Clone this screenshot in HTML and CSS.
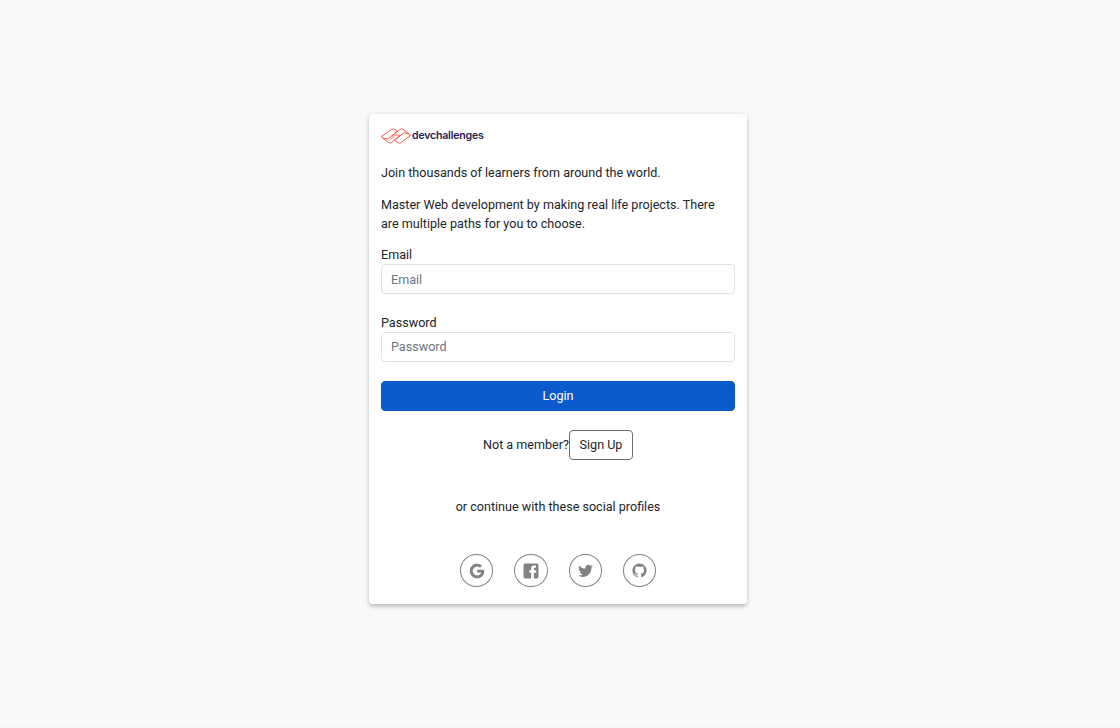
FILE: index.html
```
<!DOCTYPE html>
<html lang="en">
<head>
<meta charset="utf-8">
<title>Login | devchallenges</title>
<link rel="stylesheet" href="styles.css">
</head>
<body>
<main class="card">
  <div class="brand">
    <svg class="brand-mark" viewBox="0 0 30 16" fill="none" stroke="#f4503c" stroke-width=".9" stroke-linejoin="round" stroke-linecap="round">
      <path d="M1 8 L10.600 1.400 Q11.800 .7 13.200 1.200 L15.800 2.400 Q16.600 3 15.800 3.800 L6.800 10.800 L1.600 10 Q-.1 9.200 1 8Z"/>
      <path d="M1.600 10 L7.600 14.600 Q9 15.600 10.400 14.600 L19.600 7.600 L15 6.600 L9 11.400"/>
      <path d="M29 8 L19.600 14.800 Q18.400 15.600 17 14.800 L14 12.800 Q13.200 12 14 11.400 L22.800 4.800 L28.400 6.200 Q30 7 29 8Z"/>
      <path d="M28.400 6.200 L22 1.400 Q20.600 .4 19.200 1.400 L11.200 7.600"/>
    </svg>
    <span class="brand-name">devchallenges</span>
  </div>
  <p class="lead">Join thousands of learners from around the world.</p>
  <p class="text">Master Web development by making real life projects. There are multiple paths for you to choose.</p>
  <form class="form">
    <label class="label" for="email">Email</label>
    <input class="input" id="email" type="email" placeholder="Email">
    <label class="label" for="password">Password</label>
    <input class="input input-password" id="password" type="password" placeholder="Password">
    <button class="login" type="button">Login</button>
  </form>
  <div class="member"><span class="member-text">Not a member?</span><button class="signup" type="button">Sign Up</button></div>
  <p class="social-text">or continue with these social profiles</p>
  <div class="socials">
    <a class="social"><svg class="icon google" viewBox="0 0 24 24"><path d="M12.200 10.200v3.700h5.300c-.6 2.300-2.500 4-5.300 4a5.900 5.900 0 1 1 3.800-10.400l2.800-2.700A9.800 9.800 0 1 0 12.200 21.800c6.200 0 9.900-4.400 9.600-11.600z"/></svg></a>
    <a class="social"><svg class="icon facebook" viewBox="0 0 24 24"><path d="M5 3h14a2 2 0 0 1 2 2v14a2 2 0 0 1-2 2h-3.500v-6.800h2.700v-3h-2.700V9.500c0-.9.5-1.300 1.300-1.300H18V5.500h-2.500a3.300 3.300 0 0 0-3.300 3.300v2.400H10v3h2.200V21H5a2 2 0 0 1-2-2V5a2 2 0 0 1 2-2z"/></svg></a>
    <a class="social"><svg class="icon twitter" viewBox="0 0 24 24"><path d="M22.460 6c-.770.350-1.600.580-2.460.690.880-.530 1.560-1.370 1.880-2.380-.830.500-1.750.850-2.720 1.050C18.370 4.500 17.260 4 16 4c-2.350 0-4.270 1.920-4.270 4.290 0 .340.040.670.110.980C8.280 9.090 5.110 7.380 3 4.790c-.370.630-.580 1.370-.580 2.150 0 1.490.750 2.810 1.910 3.560-.710 0-1.370-.200-1.950-.500v.030c0 2.080 1.480 3.820 3.440 4.210a4.220 4.220 0 0 1-1.930.070 4.280 4.280 0 0 0 4 2.980 8.521 8.521 0 0 1-5.330 1.840c-.340 0-.680-.020-1.020-.060C3.440 20.290 5.700 21 8.120 21 16 21 20.330 14.460 20.330 8.790c0-.190 0-.370-.010-.560.840-.600 1.560-1.360 2.140-2.230z"/></svg></a>
    <a class="social"><svg class="icon github" viewBox="0 0 24 24"><path d="M12 2A10 10 0 0 0 2 12c0 4.420 2.870 8.170 6.840 9.500.500.080.660-.230.660-.500v-1.690c-2.770.600-3.360-1.340-3.360-1.340-.460-1.160-1.110-1.470-1.110-1.470-.910-.620.070-.600.070-.600 1 .070 1.530 1.030 1.530 1.030.870 1.520 2.340 1.070 2.910.830.090-.650.350-1.090.630-1.340-2.220-.250-4.550-1.110-4.550-4.920 0-1.110.380-2 1.030-2.710-.100-.250-.450-1.290.100-2.640 0 0 .840-.270 2.750 1.020.790-.220 1.650-.330 2.500-.330s1.710.110 2.500.330c1.910-1.290 2.750-1.020 2.750-1.020.550 1.350.200 2.390.100 2.640.650.710 1.030 1.600 1.030 2.710 0 3.820-2.340 4.660-4.570 4.910.360.310.690.920.690 1.850V21c0 .270.160.590.670.500C19.140 20.160 22 16.420 22 12A10 10 0 0 0 12 2z"/></svg></a>
  </div>
</main>
</body>
</html>
```
FILE: styles.css
```
* { box-sizing: border-box; }
body {
  margin: 0;
  height: 728px;
  padding: 114px 0 0 369px;
  background: #f9f9f9;
  border-bottom: 2px solid #f5f6f8;
  color: #212529;
  font: 12.58px/19px Roboto, sans-serif;
}
.card {
  width: 378px;
  height: 490px;
  padding: 13px 12px 0;
  background: #fff;
  border-radius: 4px;
  box-shadow: 0 3px 4px rgba(0, 0, 0, .2), 0 0 4px rgba(0, 0, 0, .08);
}
.brand { display: flex; height: 18px; }
.brand-mark { width: 30px; height: 16px; margin-top: 1px; }
.brand-name {
  margin-left: 1px;
  color: #282051;
  font: 600 10.6px/17px Inter, sans-serif;
  letter-spacing: -.22px;
}
.lead { margin: 18px 0 13px; }
.text { margin: 0 0 12px; }
.form { display: flex; flex-direction: column; }
.label { display: block; height: 19px; }
.input {
  width: 100%;
  height: 30px;
  margin: 0 0 19px;
  padding: 0 9px;
  border: 1px solid #dee2e6;
  border-radius: 4px;
  background: #fff;
  color: #212529;
  font: inherit;
}
.input-password { padding-bottom: 2px; }
.input::placeholder { color: #6c757d; opacity: 1; }
.login {
  height: 30px;
  padding: 0 0 2px;
  border: 1px solid #0b5acb;
  border-radius: 4px;
  background: #0b5acb;
  color: #fff;
  font: inherit;
}
.member { display: flex; justify-content: center; align-items: center; margin-top: 19px; }
.member-text { padding-bottom: 2px; }
.signup {
  width: 64px;
  height: 30px;
  padding: 0 0 2px;
  border: 1px solid #6c6e70;
  border-radius: 4px;
  background: #fff;
  color: #212529;
  font: inherit;
}
.social-text { margin: 37px 0 38px; text-align: center; }
.socials { display: flex; justify-content: center; gap: 21px; }
.social {
  display: flex;
  align-items: center;
  justify-content: center;
  width: 33.3px;
  height: 33px;
  border: 1px solid #828282;
  border-radius: 50%;
}
.icon { flex: none; fill: #828282; }
.google { width: 18px; height: 18px; }
.facebook { width: 20px; height: 20px; }
.twitter { width: 17px; height: 17px; }
.github { width: 17px; height: 17px; }
```
